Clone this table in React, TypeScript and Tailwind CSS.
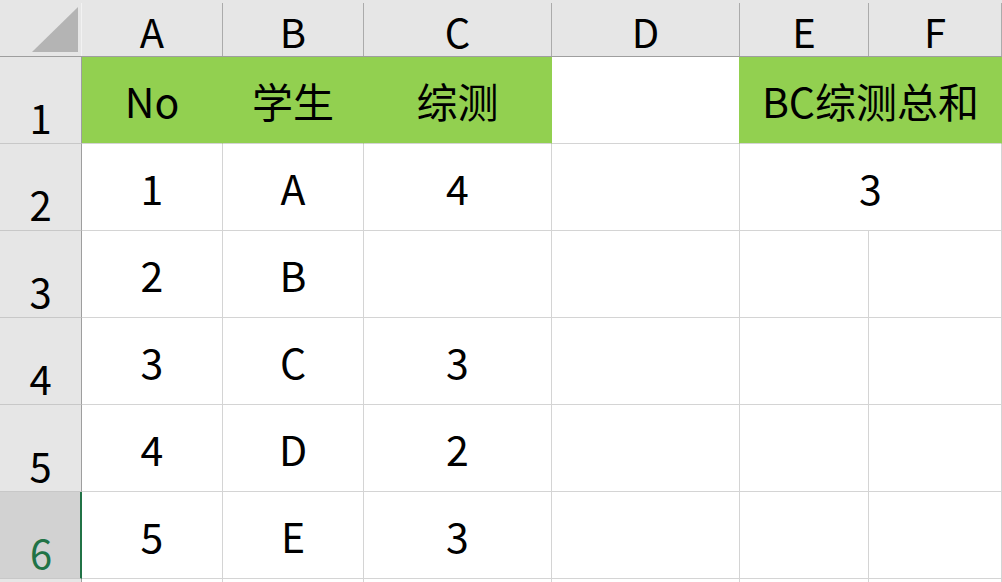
import React from "react";

const FONT = "font-['Noto_Sans_CJK_SC','Noto_Sans',sans-serif]";

type CellDef = {
  text?: string;
  span?: 1 | 2;
  green?: boolean;
  greenRight?: boolean;
};

const rows: { n: string; cells: CellDef[]; selected?: boolean }[] = [
  {
    n: "1",
    cells: [
      { text: "No", green: true },
      { text: "学生", green: true },
      { text: "综测", green: true },
      { greenRight: true },
      { text: "BC综测总和", span: 2, green: true },
    ],
  },
  {
    n: "2",
    cells: [{ text: "1" }, { text: "A" }, { text: "4" }, {}, { text: "3", span: 2 }],
  },
  { n: "3", cells: [{ text: "2" }, { text: "B" }, {}, {}, {}, {}] },
  { n: "4", cells: [{ text: "3" }, { text: "C" }, { text: "3" }, {}, {}, {}] },
  { n: "5", cells: [{ text: "4" }, { text: "D" }, { text: "2" }, {}, {}, {}] },
  { n: "6", cells: [{ text: "5" }, { text: "E" }, { text: "3" }, {}, {}, {}], selected: true },
  { n: "", cells: [{}, {}, {}, {}, {}, {}] },
];

function Cell({ c }: { c: CellDef }) {
  const base =
    "flex items-end justify-center pb-[22px] text-[41px] leading-none text-black whitespace-nowrap border-r border-b";
  const span = c.span === 2 ? " col-span-2" : "";
  let color = " bg-white border-r-[#d4d4d4] border-b-[#d4d4d4]";
  if (c.green) color = " bg-[#92d050] border-r-[#92d050] border-b-[#d4d4d4]";
  else if (c.greenRight) color = " bg-white border-r-[#92d050] border-b-[#d4d4d4]";
  return <div className={base + span + color}>{c.text}</div>;
}

function ColHeader({ label }: { label: string }) {
  return (
    <div className="flex flex-col bg-[#e6e6e6] border-b border-b-[#9e9e9e]">
      <div className="h-[3px]" />
      <div className="flex flex-1 items-end justify-center pb-[5px] text-[40px] leading-none text-black border-r border-r-[#ababab]">
        {label}
      </div>
    </div>
  );
}

export default function App() {
  return (
    <div className={"w-[1002px] h-[582px] overflow-hidden bg-white " + FONT}>
      <div className="grid grid-cols-[82px_141px_141px_188px_188px_129px_133px] grid-rows-[57px_repeat(7,87px)]">
        <div className="flex flex-col bg-[#e6e6e6] border-b border-b-[#9e9e9e]">
          <div className="h-[3px]" />
          <div className="flex-1 border-r border-r-[#f2f2f2]">
            <svg width="81" height="53" className="block">
              <polygon points="78,4 78,49 32,49" fill="#b4b4b4" />
            </svg>
          </div>
        </div>
        {["A", "B", "C", "D", "E", "F"].map((l) => (
          <ColHeader key={l} label={l} />
        ))}
        {rows.map((r, idx) => (
          <React.Fragment key={idx}>
            {r.selected ? (
              <div className="flex items-end justify-center pb-[6px] pl-[2px] text-[40px] leading-none bg-[#d2d2d2] text-[#217346] border-r-2 border-r-[#217346] border-b border-b-[#c8c8c8]">
                {r.n}
              </div>
            ) : (
              <div className="flex items-end justify-center pb-[6px] text-[40px] leading-none bg-[#e6e6e6] text-black border-r border-r-[#9e9e9e] border-b border-b-[#c8c8c8]">
                {r.n}
              </div>
            )}
            {r.cells.map((c, i) => (
              <Cell key={i} c={c} />
            ))}
          </React.Fragment>
        ))}
      </div>
    </div>
  );
}
